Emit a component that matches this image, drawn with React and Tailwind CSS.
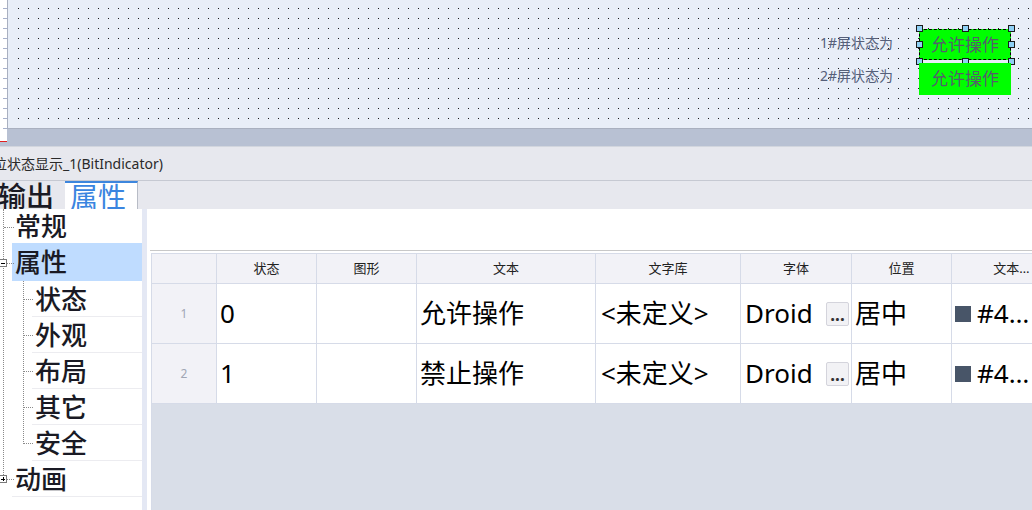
import React from 'react';

const FONT = { fontFamily: '"Noto Sans", "Noto Sans CJK SC", sans-serif' };

const columns = ['', '状态', '图形', '文本', '文字库', '字体', '位置', '文本…'];

const rows = [
  { n: 1, state: '0', text: '允许操作' },
  { n: 2, state: '1', text: '禁止操作' },
];

function Handle({ className }) {
  return <div className={`absolute w-[7px] h-[7px] bg-[#8fd0f5] border border-[#1a1a1a] ${className}`} />;
}

function Canvas() {
  return (
    <div className="relative w-full h-[129px] shrink-0 bg-[#e8eef8] border-l border-b border-[#a9b0c0] overflow-hidden">
      <svg className="absolute left-[10px] top-[8px] w-[1100px] h-[120px]">
        <defs>
          <pattern id="dots" width="10" height="10" patternUnits="userSpaceOnUse">
            <rect x="0" y="0" width="1" height="1" fill="#1a1a1a" />
          </pattern>
        </defs>
        <rect width="1100" height="120" fill="url(#dots)" />
      </svg>

      <div className="absolute left-[812px] top-[33px] text-[14px] leading-[20px] text-[#56607a]">1#屏状态为</div>
      <div className="absolute left-[812px] top-[66px] text-[14px] leading-[20px] text-[#56607a]">2#屏状态为</div>

      <div className="absolute left-[911px] top-[29px] w-[92px] h-[31px] border border-dashed border-black bg-[#00ff00] flex items-center justify-center text-[17px] text-[#555c6c]">
        允许操作
      </div>
      <Handle className="left-[908px] top-[25px]" />
      <Handle className="left-[954px] top-[25px]" />
      <Handle className="left-[1000px] top-[25px]" />
      <Handle className="left-[908px] top-[41px]" />
      <Handle className="left-[1000px] top-[41px]" />
      <Handle className="left-[908px] top-[58px]" />
      <Handle className="left-[954px] top-[58px]" />
      <Handle className="left-[1000px] top-[58px]" />

      <div className="absolute left-[911px] top-[63px] w-[92px] h-[32px] bg-[#00ff00] flex items-center justify-center text-[17px] text-[#555c6c]">
        允许操作
      </div>
    </div>
  );
}

function Ruler() {
  return (
    <div className="w-[7px] h-[142px] bg-white border-b border-[#e02020] shrink-0">
      <svg width="7" height="141">
        {Array.from({ length: 13 }).map((_, i) => (
          <rect key={i} x="3" y={8 + i * 10} width="4" height="1" fill="#a6b0cc" />
        ))}
      </svg>
    </div>
  );
}

function TreeRow({ label, child, selected, height = 'h-[36px]', divider }) {
  return (
    <div className={`${height} flex items-center ${child ? 'pl-[32px]' : 'pl-[12px]'}`}>
      <div
        className={`h-full flex-1 flex items-center pl-[3px] ${selected ? 'bg-[#bfdcff]' : ''} ${
          divider ? 'border-b border-[#ececf0]' : ''
        }`}
      >
        <span className="text-[26px] leading-none font-medium text-[#1a1a24]">{label}</span>
      </div>
    </div>
  );
}

function Tree() {
  return (
    <div className="relative w-[142px] shrink-0 bg-white overflow-hidden">
      {/* connector lines */}
      <div className="absolute left-[3px] top-0 h-[270px] border-l border-dotted border-[#8a8a8a]" />
      <div className="absolute left-[4px] top-[18px] w-[10px] border-t border-dotted border-[#8a8a8a]" />
      <div className="absolute left-[7px] top-[54px] w-[7px] border-t border-dotted border-[#8a8a8a]" />
      <div className="absolute left-[7px] top-[270px] w-[7px] border-t border-dotted border-[#8a8a8a]" />
      <div className="absolute left-[23px] top-[72px] h-[163px] border-l border-dotted border-[#8a8a8a]" />
      {[90, 126, 162, 198, 234].map((y) => (
        <div key={y} className="absolute left-[24px] w-[9px] border-t border-dotted border-[#8a8a8a]" style={{ top: y }} />
      ))}
      <div className="absolute left-[-1px] top-[50px] w-[8px] h-[8px] bg-white border border-[#7a7a7a] flex items-center justify-center">
        <div className="w-[4px] h-px bg-black" />
      </div>
      <div className="absolute left-[-1px] top-[266px] w-[8px] h-[8px] bg-white border border-[#7a7a7a] flex items-center justify-center">
        <div className="relative w-[4px] h-[4px]">
          <div className="absolute left-0 top-[1.5px] w-[4px] h-px bg-black" />
          <div className="absolute top-0 left-[1.5px] h-[4px] w-px bg-black" />
        </div>
      </div>

      <TreeRow label="常规" height="h-[34px]" />
      <TreeRow label="属性" height="h-[38px]" selected />
      <TreeRow label="状态" child divider />
      <TreeRow label="外观" child divider />
      <TreeRow label="布局" child divider />
      <TreeRow label="其它" child divider />
      <TreeRow label="安全" child divider />
      <TreeRow label="动画" divider />
    </div>
  );
}

function Table() {
  const grid = 'grid grid-cols-[65px_100px_100px_179px_145px_111px_100px_120px]';
  return (
    <div className="flex-1 flex flex-col overflow-hidden bg-[#d9dee8] border-l border-[#d6dbe8] w-[900px]">
      <div className={`${grid} h-[31px] bg-[#f2f2f7] border-t border-b border-[#d6dbe8]`}>
        {columns.map((c, i) => (
          <div key={i} className="border-r border-[#d6dbe8] flex items-center justify-center text-[13px] text-[#222]">
            {c}
          </div>
        ))}
      </div>
      {rows.map((r) => (
        <div key={r.n} className={`${grid} h-[60px] bg-white border-b border-[#d6dbe8] text-[26px] text-black`}>
          <div className="bg-[#f2f2f7] border-r border-[#d6dbe8] flex items-center justify-center text-[12px] text-[#a0a6b4]">
            {r.n}
          </div>
          <div className="border-r border-[#d6dbe8] flex items-center pl-[3px]">{r.state}</div>
          <div className="border-r border-[#d6dbe8]" />
          <div className="border-r border-[#d6dbe8] flex items-center pl-[3px]">{r.text}</div>
          <div className="border-r border-[#d6dbe8] flex items-center pl-[5px]">&lt;未定义&gt;</div>
          <div className="border-r border-[#d6dbe8] flex items-center pl-[4px] pr-[2px]">
            <span className="flex-1">Droid</span>
            <span className="w-[23px] h-[24px] rounded-[2px] bg-[#f2f2f5] border border-[#d4d4dc] flex items-end justify-center text-[17px] font-bold leading-[14px] pb-[3px] text-[#333]">
              ...
            </span>
          </div>
          <div className="border-r border-[#d6dbe8] flex items-center pl-[3px]">居中</div>
          <div className="flex items-center pl-[3px] gap-[6px]">
            <span className="w-[16px] h-[16px] bg-[#485568]" />
            <span>#4…</span>
          </div>
        </div>
      ))}
    </div>
  );
}

export default function App() {
  return (
    <div className="w-[1032px] h-[510px] overflow-hidden flex flex-col bg-[#e7e8ee]" style={FONT}>
      {/* design canvas */}
      <div className="h-[146px] flex bg-[#b8c1d3] shrink-0">
        <Ruler />
        <div className="flex-1 flex flex-col">
          <Canvas />
        </div>
      </div>
      <div className="h-px bg-[#d2d6de] shrink-0" />

      {/* property panel */}
      <div className="h-[34px] flex items-center border-b border-[#c6c9d2] shrink-0 overflow-hidden">
        <span className="ml-[-7px] text-[14px] text-[#2a2a2a] whitespace-nowrap">位状态显示_1(BitIndicator)</span>
      </div>
      <div className="h-[28px] flex items-end shrink-0 overflow-hidden">
        <div className="w-[65px] h-[28px] ml-[-2px] text-[28px] leading-[30px] font-medium text-[#1a1a24] whitespace-nowrap">输出</div>
        <div className="w-[73px] h-[28px] bg-white border-t-2 border-r border-t-[#3d86dd] border-r-[#b8bcc6] ml-[2px] text-[28px] leading-[28px] text-[#3a85e0] pl-[5px] whitespace-nowrap overflow-hidden">
          属性
        </div>
      </div>

      <div className="flex-1 flex min-h-0">
        <Tree />
        <div className="w-[5px] bg-[#e4e8f4] shrink-0" />
        <div className="flex-1 flex flex-col bg-white min-w-0">
          <div className="h-[41px] shrink-0" />
          <div className="h-px bg-[#c8c8c8] ml-[3px] shrink-0" />
          <div className="h-[2px] shrink-0" />
          <div className="flex-1 flex pl-[4px] min-h-0">
            <Table />
          </div>
        </div>
      </div>
    </div>
  );
}
